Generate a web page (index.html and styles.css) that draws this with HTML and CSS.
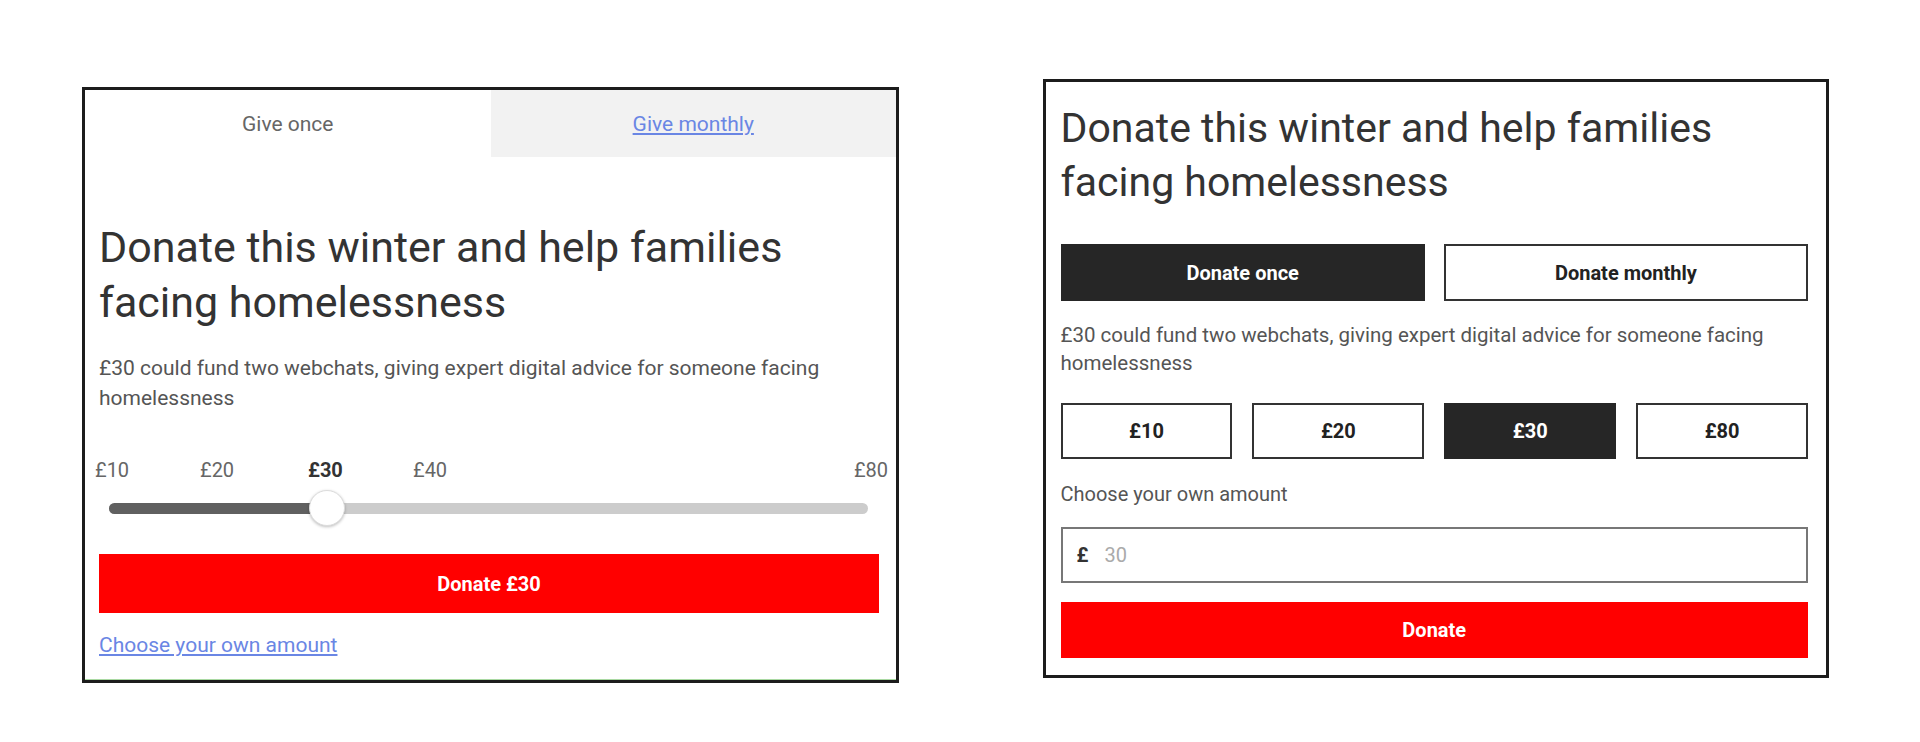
FILE: index.html
```html
<!DOCTYPE html>
<html lang="en">
<head>
  <meta charset="UTF-8" />
  <meta name="viewport" content="width=device-width, initial-scale=1.0"/>
  <title>Donate this winter</title>
  <link rel="stylesheet" href="styles.css">
</head>
<body>
  <div class="page">

    <!-- version A: tabs + slider -->
    <div class="card card-slider">
      <div class="tabs">
        <div class="tab">Give once</div>
        <div class="tab tab-inactive"><a href="#">Give monthly</a></div>
      </div>

      <div class="card-body">
        <h2>Donate this winter and help families facing homelessness</h2>
        <p class="intro">£30 could fund two webchats, giving expert digital advice for someone facing homelessness</p>

        <div class="scale">
          <span>£10</span>
          <span>£20</span>
          <span class="current">£30</span>
          <span>£40</span>
          <span>£80</span>
        </div>
        <div class="track">
          <div class="track-fill"></div>
          <div class="thumb"></div>
        </div>

        <button class="btn-donate btn-tall">Donate £30</button>
        <p class="own-amount"><a href="#">Choose your own amount</a></p>
      </div>
    </div>

    <!-- version B: buttons -->
    <div class="card card-buttons">
      <h2 class="heading-b">Donate this winter and help families facing homelessness</h2>

      <div class="frequency">
        <button class="btn-option selected">Donate once</button>
        <button class="btn-option">Donate monthly</button>
      </div>

      <p class="intro intro-b">£30 could fund two webchats, giving expert digital advice for someone facing homelessness</p>

      <div class="amounts">
        <button class="btn-option btn-amount">£10</button>
        <button class="btn-option btn-amount">£20</button>
        <button class="btn-option btn-amount selected">£30</button>
        <button class="btn-option btn-amount">£80</button>
      </div>

      <label class="own-label" for="amount">Choose your own amount</label>
      <div class="amount-field">
        <span class="currency">£</span>
        <input type="text" id="amount" placeholder="30" />
      </div>

      <button class="btn-donate">Donate</button>
    </div>

  </div>
</body>
</html>
```

FILE: styles.css
```css
* {
  box-sizing: border-box;
}

body {
  margin: 0;
  font-family: Roboto, "Liberation Sans", Arial, sans-serif;
  background: #fff;
  color: #333;
}

.page {
  display: flex;
  align-items: flex-start;
  gap: 144px;
  padding: 79px 0 0 82px;
}

.card {
  background: #fff;
  border: 3px solid #1c1c1c;
}

h2 {
  margin: 0;
  font-weight: 400;
  color: #333;
}

button {
  font-family: inherit;
  cursor: pointer;
}

/* ---- left card ---- */

.card-slider {
  width: 817px;
  margin-top: 8px;
  box-shadow: inset 0 -1px 0 #a9d9a2;
}

.tabs {
  display: flex;
  height: 67px;
}

.tab {
  flex: 1;
  display: flex;
  align-items: center;
  justify-content: center;
  font-size: 21px;
  color: #666;
}

.tab-inactive {
  background: #f2f2f2;
}

.tab a,
.own-amount a {
  color: #6a86e4;
  text-decoration: underline;
}

.card-body {
  padding: 0 17px 20px 14px;
}

.card-body h2 {
  margin-top: 63px;
  font-size: 43px;
  line-height: 55px;
}

.intro {
  margin: 23px 0 0;
  font-size: 21px;
  line-height: 30px;
  color: #555;
}

.scale {
  display: grid;
  grid-template-columns: 105px 108px 105px 1fr auto;
  margin: 46px -9px 0 -4px;
  font-size: 20px;
  line-height: 22px;
  color: #666;
}

.scale .current {
  font-weight: 700;
  color: #333;
}

.track {
  position: relative;
  height: 11px;
  margin: 22px 11px 0 10px;
  background: #cccccc;
  border-radius: 6px;
}

.track-fill {
  width: 218px;
  height: 100%;
  background: #606060;
  border-radius: 6px 0 0 6px;
}

.thumb {
  position: absolute;
  left: 200px;
  top: -13px;
  width: 36px;
  height: 36px;
  border-radius: 50%;
  background: #fff;
  border: 1px solid #dcdcdc;
  box-shadow: 0 1px 3px rgba(0, 0, 0, 0.25);
}

.btn-donate {
  display: block;
  width: 100%;
  height: 56px;
  margin-top: 19px;
  border: none;
  background: #ff0000;
  color: #fff;
  font-size: 20px;
  font-weight: 700;
}

.btn-tall {
  height: 59px;
  margin-top: 40px;
}

.own-amount {
  margin: 17px 0 0;
  font-size: 21px;
  line-height: 30px;
}

/* ---- right card ---- */

.card-buttons {
  width: 786px;
  padding: 19px 18px 17px 14.5px;
}

.heading-b {
  font-size: 41px;
  line-height: 54px;
}

.frequency {
  display: grid;
  grid-template-columns: 1fr 1fr;
  gap: 19px;
  margin-top: 35px;
}

.btn-option {
  height: 57px;
  background: #fff;
  border: 2px solid #333;
  color: #222;
  font-size: 20px;
  font-weight: 700;
}

.btn-option.selected {
  background: #262626;
  border-color: #262626;
  color: #fff;
}

.intro-b {
  margin-top: 20px;
  font-size: 20.5px;
  line-height: 28px;
}

.amounts {
  display: grid;
  grid-template-columns: repeat(4, 1fr);
  gap: 20px;
  margin-top: 26px;
}

.btn-amount {
  height: 56px;
  font-size: 20px;
}

.own-label {
  display: block;
  margin-top: 21px;
  font-size: 20px;
  line-height: 28px;
  color: #555;
}

.amount-field {
  display: flex;
  align-items: center;
  height: 56px;
  margin-top: 19px;
  padding-left: 14px;
  border: 2px solid #777;
}

.currency {
  font-size: 20px;
  font-weight: 700;
  color: #333;
}

.amount-field input {
  flex: 1;
  margin-left: 16px;
  border: none;
  outline: none;
  padding: 0;
  font-family: inherit;
  font-size: 20px;
  color: #333;
}

.amount-field input::placeholder {
  color: #aaa;
}
```
